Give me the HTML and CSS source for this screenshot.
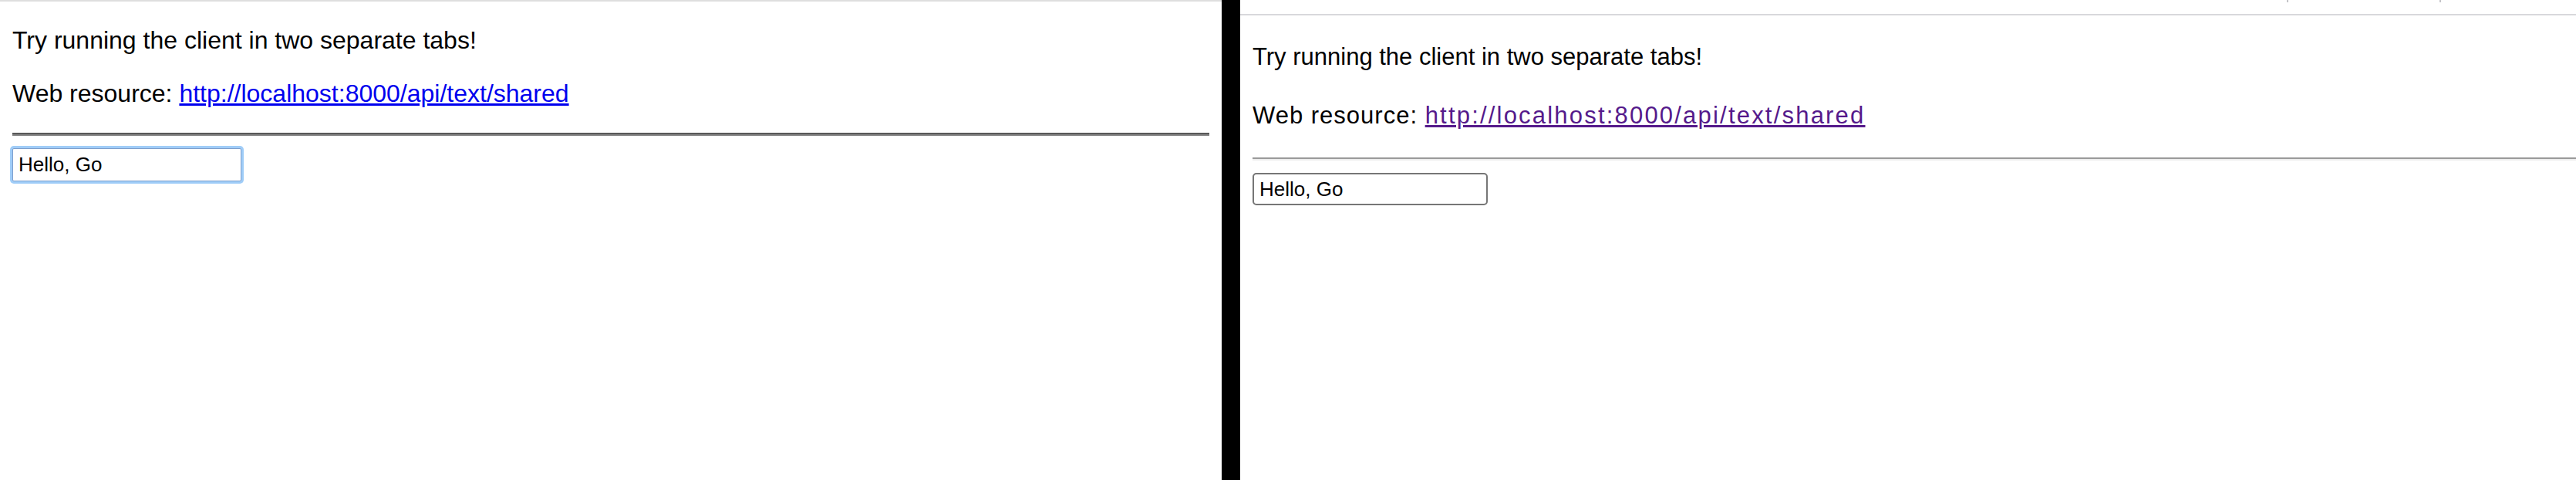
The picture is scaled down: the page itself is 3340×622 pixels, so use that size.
FILE: index.html
```html
<!DOCTYPE html>
<html>
<head>
<meta charset="utf-8">
<title>Shared text</title>
<link rel="stylesheet" href="styles.css">
</head>
<body>
<div class="stage">
  <section class="pane pane-left">
    <div class="chrome-line"></div>
    <div class="content">
      <p>Try running the client in two separate tabs!</p>
      <p class="resource">Web resource: <a class="link" href="#">http://localhost:8000/api/text/shared</a></p>
      <hr class="rule">
      <input class="field" type="text" value="Hello, Go">
    </div>
  </section>
  <div class="divider"></div>
  <section class="pane pane-right">
    <div class="chrome-top"><span class="tick tick-a"></span><span class="tick tick-b"></span></div>
    <div class="chrome-line"></div>
    <div class="content">
      <p>Try running the client in two separate tabs!</p>
      <p class="resource">Web resource: <a class="link" href="#">http://localhost:8000/api/text/shared</a></p>
      <hr class="rule">
      <input class="field" type="text" value="Hello, Go">
    </div>
  </section>
</div>
</body>
</html>
```
FILE: styles.css
```css
html, body {
  margin: 0;
  padding: 0;
  background: #ffffff;
}
.stage {
  display: flex;
  width: 3340px;
  height: 622px;
  overflow: hidden;
}
.pane {
  background: #ffffff;
  display: flex;
  flex-direction: column;
}
.pane-left {
  width: 1584px;
  flex: 0 0 1584px;
}
.divider {
  width: 24px;
  flex: 0 0 24px;
  background: #000000;
}
.pane-right {
  flex: 1 1 auto;
}
.content {
  padding: 0 16px;
  color: #000;
}
.content p {
  margin: 32px 0;
}
.link {
  text-decoration: underline;
}

/* left: chrome-like rendering */
.pane-left .chrome-line {
  height: 2px;
  background: #dedede;
}
.pane-left .content {
  font-family: "Liberation Sans", Arial, sans-serif;
  font-size: 32px;
  line-height: 37px;
}
.pane-left .link {
  color: #0000ee;
}
.pane-left .rule {
  margin: 32px 0 16px;
  height: 0;
  border: none;
  border-top: 2px solid #585858;
  border-bottom: 2px solid #808080;
}
.pane-left .field {
  display: block;
  box-sizing: border-box;
  width: 297px;
  height: 43px;
  margin: 0;
  padding: 0 7px;
  font-family: "Liberation Sans", Arial, sans-serif;
  font-size: 26px;
  color: #000;
  border: 1px solid #7d9fcd;
  border-radius: 2px;
  box-shadow: 0 0 0 3px #a0cdf8;
  outline: none;
}

/* right: firefox-like rendering */
.chrome-top {
  height: 18px;
  display: flex;
  align-items: flex-start;
}
.tick {
  width: 2px;
  height: 3px;
  background: #c4c4c8;
}
.tick-a {
  margin-left: 1357px;
}
.tick-b {
  margin-left: 196px;
}
.pane-right .chrome-line {
  height: 2px;
  background: #d8d8dc;
}
.pane-right .content {
  font-family: "Liberation Sans", Arial, sans-serif;
  font-size: 31px;
  line-height: 44px;
  padding-right: 0;
}
.pane-right .content p {
  padding-top: 2px;
  margin: 30px 0 32px;
}
.pane-right .content p + p {
  margin-top: 32px;
  padding-top: 0;
}
.pane-right .resource {
  letter-spacing: 1px;
}
.pane-right .link {
  color: #551a8b;
  letter-spacing: 2.2px;
}
.pane-right .rule {
  margin: 32px 0 16px;
  height: 0;
  border: none;
  border-top: 2px solid #9a9a9a;
  border-bottom: 2px solid #ececec;
}
.pane-right .field {
  display: block;
  box-sizing: border-box;
  width: 305px;
  height: 42px;
  margin: 4px 0 0;
  padding: 0 7px;
  font-family: "Liberation Sans", Arial, sans-serif;
  font-size: 26px;
  color: #000;
  border: 2px solid #767676;
  border-radius: 5px;
  background: #fff;
  outline: none;
}
```
